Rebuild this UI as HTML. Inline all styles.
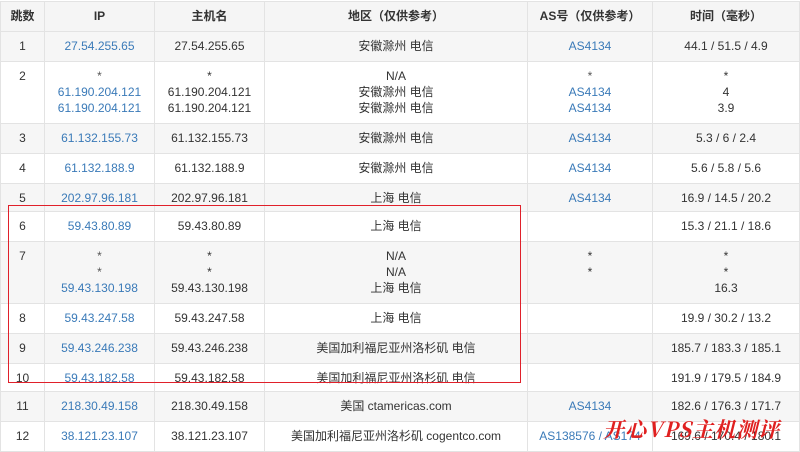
<!DOCTYPE html>
<html><head><meta charset="utf-8"><style>
body{margin:0;width:800px;height:451px;overflow:hidden;background:#fff;font-family:"Liberation Sans","Noto Sans CJK SC",sans-serif;font-size:12px;color:#333;position:relative}
table{border-collapse:collapse;position:absolute;left:0;top:1px;width:799px;table-layout:fixed}
td,th{border:1px solid #e3e3e3;text-align:center;vertical-align:top;padding:6px 2px 0;line-height:16px}
th{font-weight:bold;background:#f5f5f5;font-size:12px}
tr{height:30px}
tr.h{height:30px}
tr.s{height:28px}
tr.t{height:62px}
tr.g td{background:#f6f6f6}
.b{color:#3a7ab8}
.k{color:#555}
#box{position:absolute;left:8px;top:205px;width:511px;height:176px;border:1.5px solid #e0202a}
#wm{position:absolute;left:603px;top:414px;color:#e02020;font-size:21px;font-style:italic;font-family:"Noto Serif CJK SC",serif;letter-spacing:1px;font-weight:bold;white-space:nowrap}
</style></head><body>
<table>
<colgroup><col style="width:44px"><col style="width:110px"><col style="width:110px"><col style="width:263px"><col style="width:125px"><col style="width:147px"></colgroup>
<tr class="h"><th>跳数</th><th>IP</th><th>主机名</th><th>地区（仅供参考）</th><th>AS号（仅供参考）</th><th>时间（毫秒）</th></tr>
<tr class="g"><td>1</td><td class="b">27.54.255.65</td><td>27.54.255.65</td><td>安徽滁州 电信</td><td class="b">AS4134</td><td>44.1 / 51.5 / 4.9</td></tr>
<tr class="t"><td>2</td><td class="b"><span class="k">*</span><br>61.190.204.121<br>61.190.204.121</td><td>*<br>61.190.204.121<br>61.190.204.121</td><td>N/A<br>安徽滁州 电信<br>安徽滁州 电信</td><td class="b"><span class="k">*</span><br>AS4134<br>AS4134</td><td>*<br>4<br>3.9</td></tr>
<tr class="g"><td>3</td><td class="b">61.132.155.73</td><td>61.132.155.73</td><td>安徽滁州 电信</td><td class="b">AS4134</td><td>5.3 / 6 / 2.4</td></tr>
<tr><td>4</td><td class="b">61.132.188.9</td><td>61.132.188.9</td><td>安徽滁州 电信</td><td class="b">AS4134</td><td>5.6 / 5.8 / 5.6</td></tr>
<tr class="g s"><td>5</td><td class="b">202.97.96.181</td><td>202.97.96.181</td><td>上海 电信</td><td class="b">AS4134</td><td>16.9 / 14.5 / 20.2</td></tr>
<tr><td>6</td><td class="b">59.43.80.89</td><td>59.43.80.89</td><td>上海 电信</td><td></td><td>15.3 / 21.1 / 18.6</td></tr>
<tr class="g t"><td>7</td><td class="b"><span class="k">*<br>*</span><br>59.43.130.198</td><td>*<br>*<br>59.43.130.198</td><td>N/A<br>N/A<br>上海 电信</td><td>*<br>*</td><td>*<br>*<br>16.3</td></tr>
<tr><td>8</td><td class="b">59.43.247.58</td><td>59.43.247.58</td><td>上海 电信</td><td></td><td>19.9 / 30.2 / 13.2</td></tr>
<tr class="g"><td>9</td><td class="b">59.43.246.238</td><td>59.43.246.238</td><td>美国加利福尼亚州洛杉矶 电信</td><td></td><td>185.7 / 183.3 / 185.1</td></tr>
<tr class="s"><td>10</td><td class="b">59.43.182.58</td><td>59.43.182.58</td><td>美国加利福尼亚州洛杉矶 电信</td><td></td><td>191.9 / 179.5 / 184.9</td></tr>
<tr class="g"><td>11</td><td class="b">218.30.49.158</td><td>218.30.49.158</td><td>美国 ctamericas.com</td><td class="b">AS4134</td><td>182.6 / 176.3 / 171.7</td></tr>
<tr><td>12</td><td class="b">38.121.23.107</td><td>38.121.23.107</td><td>美国加利福尼亚州洛杉矶 cogentco.com</td><td class="b">AS138576 / AS174</td><td>169.6 / 170.4 / 180.1</td></tr>
</table>
<div id="box"></div>
<div id="wm">开心VPS主机测评</div>
</body></html>
